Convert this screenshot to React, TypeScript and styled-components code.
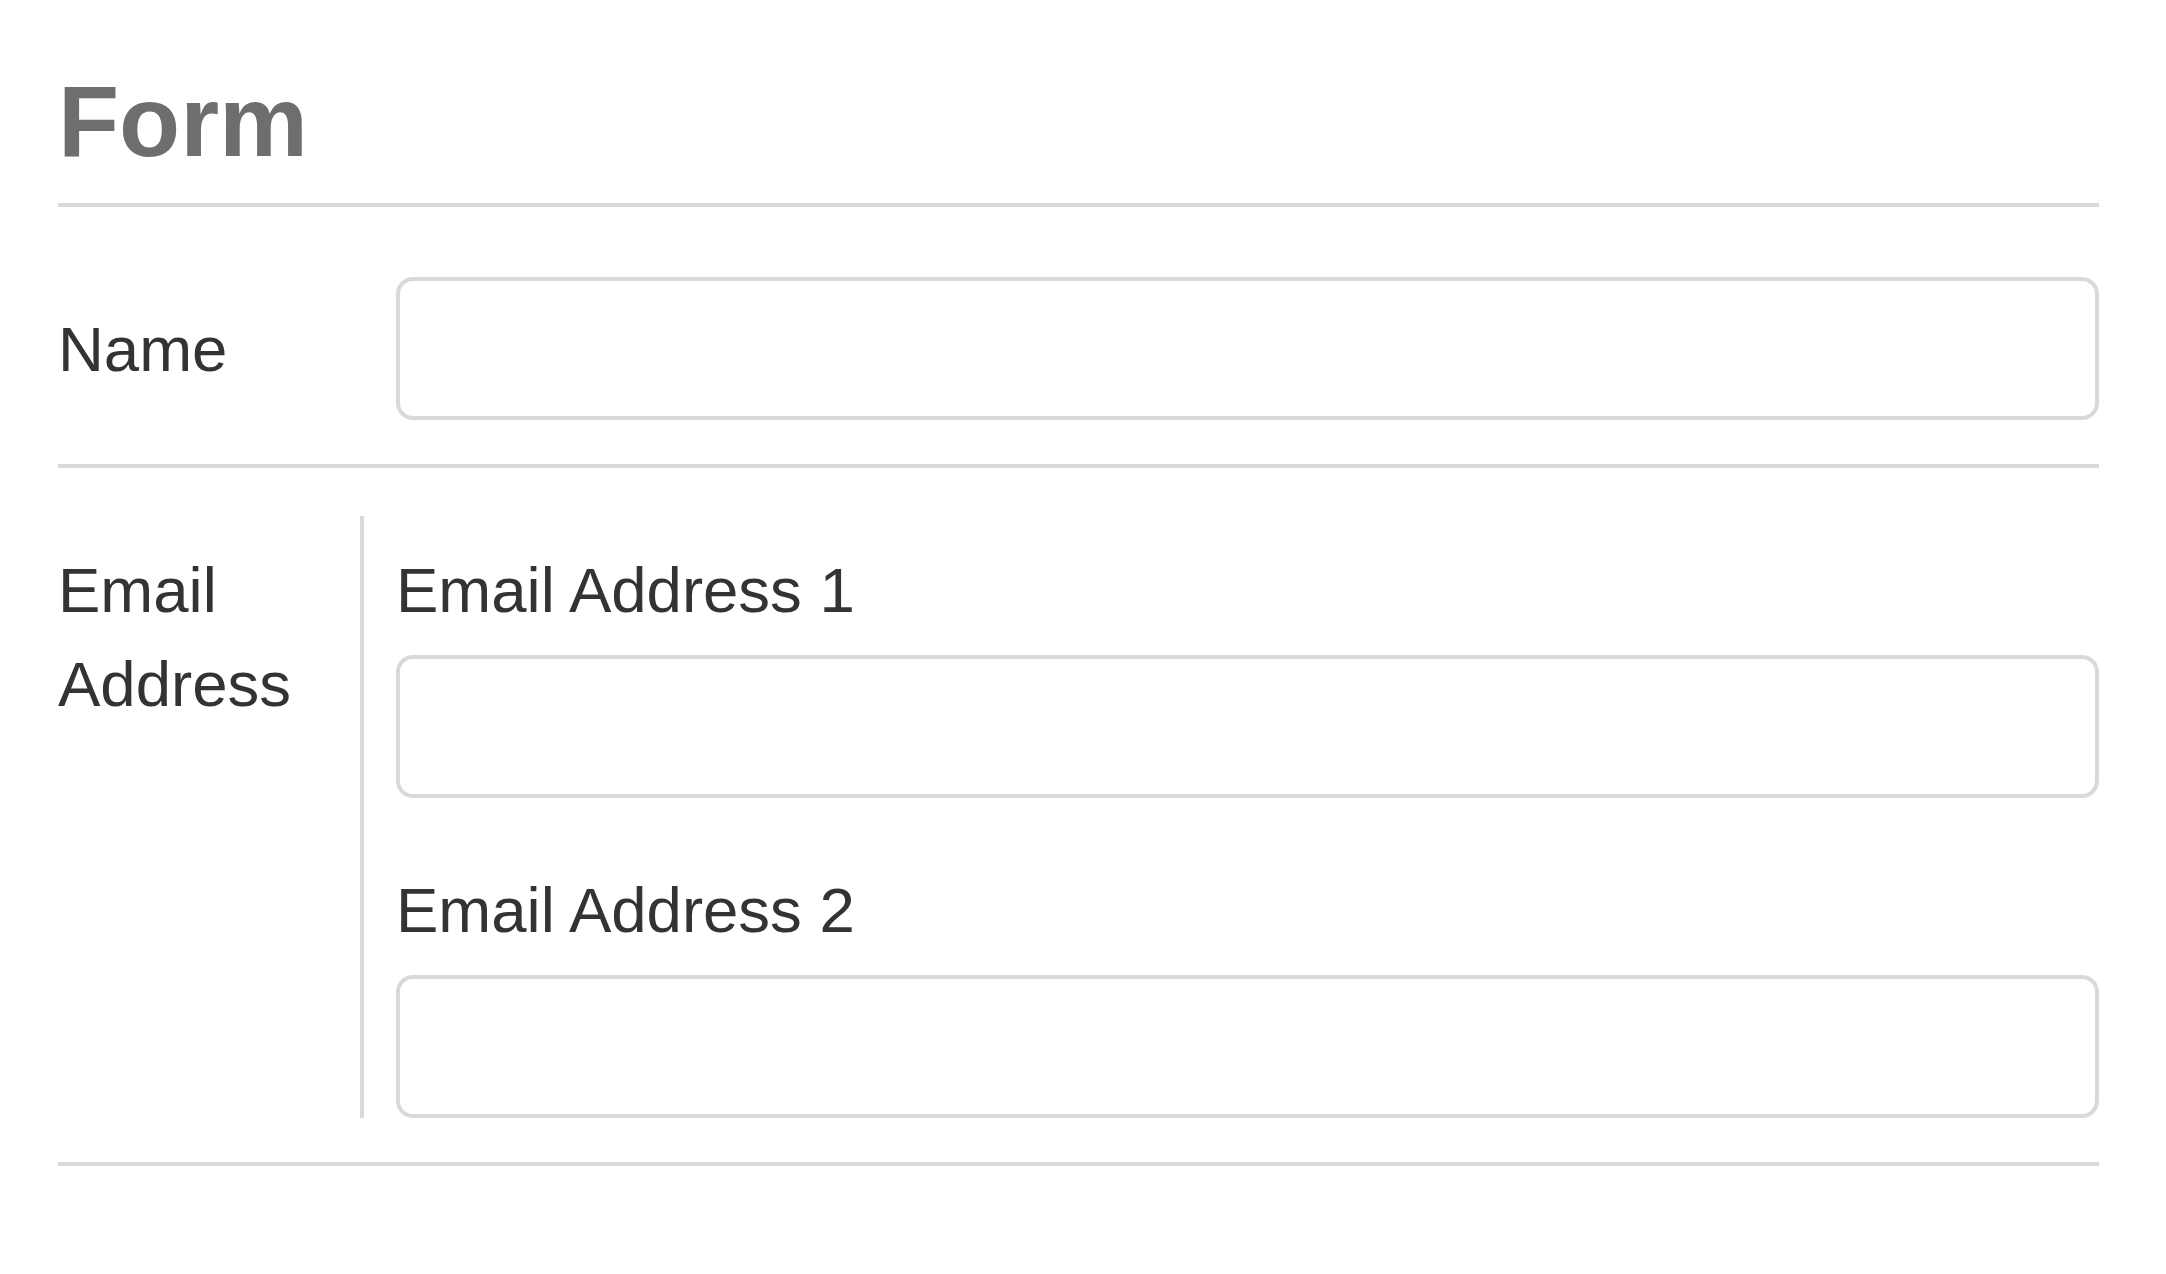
import React from "react";
import styled, { createGlobalStyle } from "styled-components";

const GlobalStyle = createGlobalStyle`
  html, body {
    margin: 0;
    padding: 0;
    background: #ffffff;
  }
  body {
    font-family: "Liberation Sans", Arial, sans-serif;
    color: #333333;
  }
`;

const Page = styled.main`
  box-sizing: border-box;
  padding: 66px 0 0 58px;
  width: 2099px;
`;

const Title = styled.h1`
  margin: 0;
  padding-bottom: 27px;
  border-bottom: 4px solid #d9d9d9;
  font-family: "Liberation Sans", Arial, sans-serif;
  font-weight: 700;
  font-size: 100px;
  line-height: 110px;
  color: #6e6e6e;
`;

const Row = styled.div<{ $top: number; $center?: boolean }>`
  display: grid;
  grid-template-columns: 302px 1fr;
  align-items: ${(p) => (p.$center ? "center" : "start")};
  padding: ${(p) => p.$top}px 0 44px;
  border-bottom: 4px solid #d9d9d9;
`;

const Label = styled.label<{ $padTop?: number }>`
  display: block;
  font-size: 63.5px;
  line-height: 94px;
  color: #333333;
  padding-top: ${(p) => p.$padTop ?? 0}px;
`;

const Field = styled.div<{ $divided?: boolean }>`
  box-sizing: border-box;
  display: flex;
  flex-direction: column;
  padding-left: ${(p) => (p.$divided ? 32 : 36)}px;
  padding-top: ${(p) => (p.$divided ? 27 : 0)}px;
  border-left: ${(p) => (p.$divided ? "4px solid #d9d9d9" : "none")};
`;

const SubGroup = styled.div<{ $gap?: number }>`
  display: flex;
  flex-direction: column;
  gap: 18px;
  margin-top: ${(p) => p.$gap ?? 0}px;
`;

const Input = styled.input`
  box-sizing: border-box;
  display: block;
  width: 100%;
  height: 143px;
  margin: 0;
  border: 4px solid #d9d9d9;
  border-radius: 17px;
  background: #ffffff;
  font-family: "Liberation Sans", Arial, sans-serif;
  font-size: 64px;
  padding: 0 40px;
  outline: none;
`;

export default function App() {
  return (
    <>
      <GlobalStyle />
      <Page>
        <Title>Form</Title>
        <Row $top={70} $center>
          <Label htmlFor="name">Name</Label>
          <Field>
            <Input id="name" type="text" />
          </Field>
        </Row>
        <Row $top={48}>
          <Label $padTop={27}>
            Email
            <br />
            Address
          </Label>
          <Field $divided>
            <SubGroup>
              <Label htmlFor="email1">Email Address 1</Label>
              <Input id="email1" type="email" />
            </SubGroup>
            <SubGroup $gap={65}>
              <Label htmlFor="email2">Email Address 2</Label>
              <Input id="email2" type="email" />
            </SubGroup>
          </Field>
        </Row>
      </Page>
    </>
  );
}
